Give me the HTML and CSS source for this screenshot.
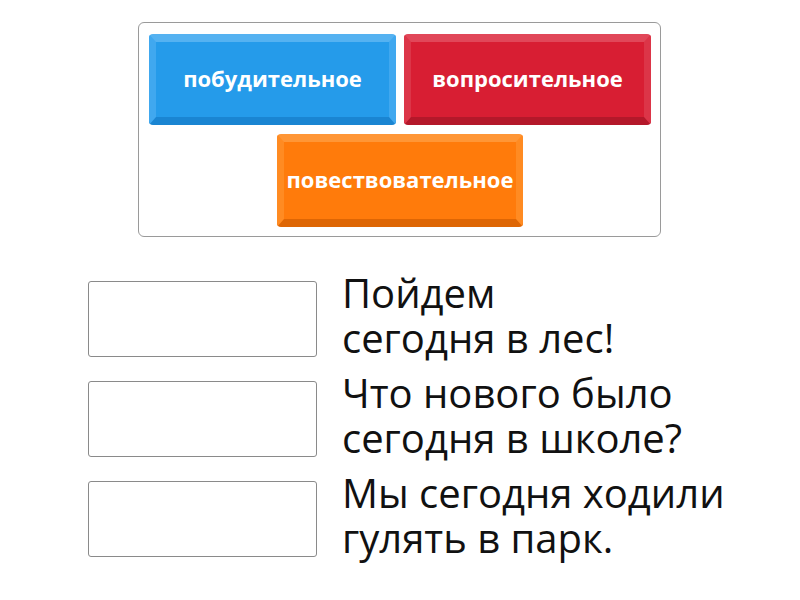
FILE: index.html
```html
<!DOCTYPE html>
<html lang="ru">
<head>
<meta charset="utf-8">
<link rel="stylesheet" href="styles.css">
</head>
<body>
<div class="bank">
  <div class="tile tile-blue">побудительное</div>
  <div class="tile tile-red">вопросительное</div>
  <div class="tile tile-orange">повествовательное</div>
</div>
<div class="pairs">
  <div class="pair">
    <div class="slot"></div>
    <div class="phrase">Пойдем<br>сегодня в лес!</div>
  </div>
  <div class="pair">
    <div class="slot"></div>
    <div class="phrase">Что нового было сегодня в школе?</div>
  </div>
  <div class="pair">
    <div class="slot"></div>
    <div class="phrase">Мы сегодня ходили гулять в парк.</div>
  </div>
</div>
</body>
</html>
```
FILE: styles.css
```css
html, body {
  margin: 0;
  padding: 0;
  background: #fff;
}
body {
  width: 800px;
  height: 600px;
  font-family: "Open Sans", "Noto Sans", sans-serif;
  color: #111;
  overflow: hidden;
}
.bank {
  box-sizing: border-box;
  width: 523px;
  height: 215px;
  margin: 22px 0 0 138px;
  border: 1px solid #9a9a9a;
  border-radius: 6px;
  padding: 11px 9px 9px 10px;
  display: flex;
  flex-wrap: wrap;
  justify-content: center;
  align-content: flex-start;
  gap: 9px 8px;
}
.tile {
  box-sizing: border-box;
  width: 247px;
  height: 91px;
  border-radius: 4px;
  border-style: solid;
  border-width: 8px 7px 8px 7px;
  display: flex;
  align-items: center;
  justify-content: center;
  color: #fff;
  font-weight: 700;
  font-size: 22px;
  padding-bottom: 4px;
  white-space: nowrap;
}
.tile-blue {
  background: #259bea;
  border-color: #55b2f1 #40a8ef #1a85d2 #40a8ef;
}
.tile-red {
  background: #d81e33;
  border-color: #e14759 #dc3548 #b4182a #dc3548;
}
.tile-orange {
  width: 246px;
  height: 93px;
  background: #ff7b0b;
  border-color: #ff9636 #ff8b22 #de6604 #ff8b22;
}
.pairs {
  margin: 32px 0 0 88px;
  display: flex;
  flex-direction: column;
}
.pair {
  height: 100px;
  display: flex;
  align-items: center;
  gap: 25px;
}
.slot {
  box-sizing: border-box;
  flex: 0 0 229px;
  height: 76px;
  border: 1px solid #8a8a8a;
  border-radius: 3px;
  background: #fff;
}
.phrase {
  width: 410px;
  font-size: 40px;
  line-height: 45px;
  padding-bottom: 8px;
  color: #111;
}
```
